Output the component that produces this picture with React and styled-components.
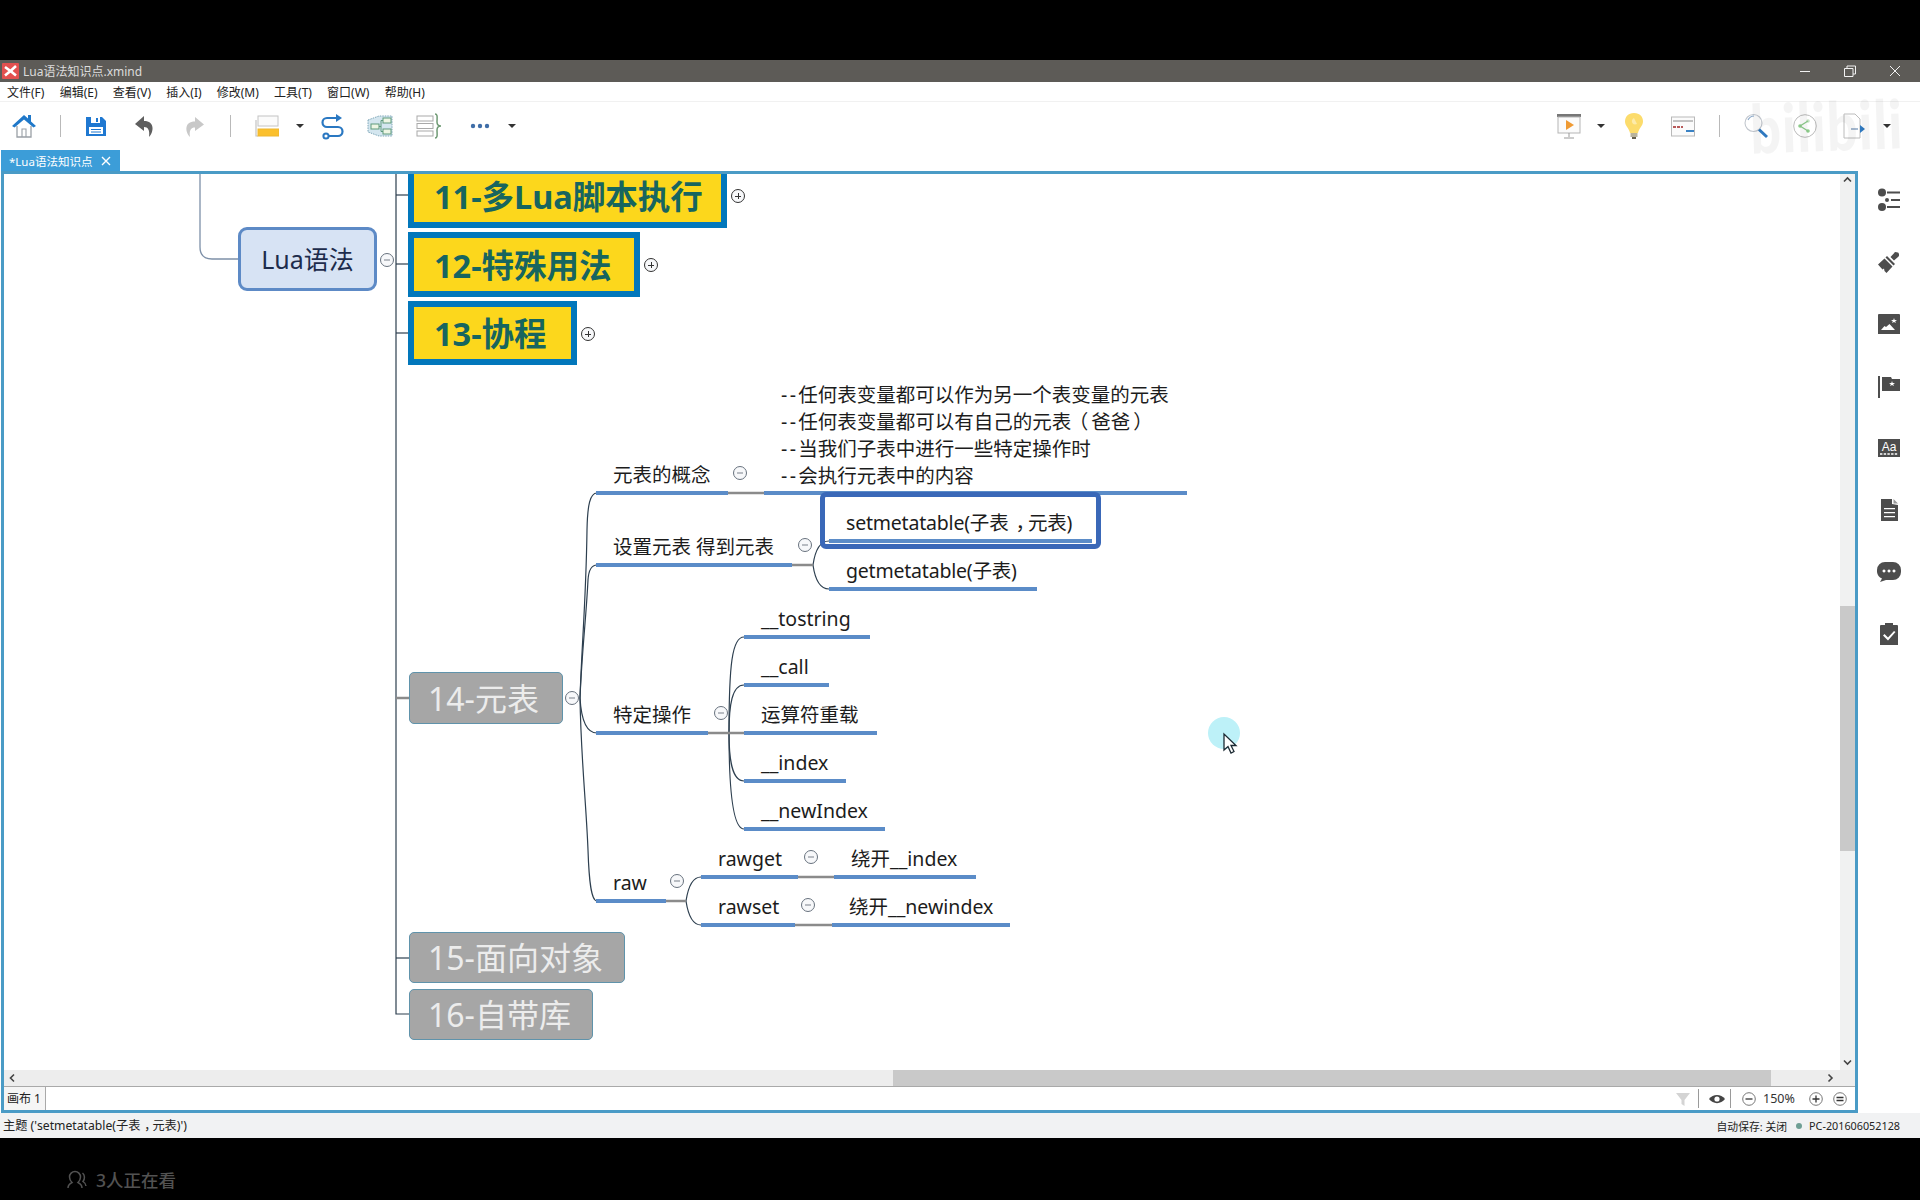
import styled, { createGlobalStyle } from 'styled-components';

const FONT = `"Noto Sans", "Noto Sans CJK SC", sans-serif`;

const GlobalStyle = createGlobalStyle`
    html, body {
        margin: 0;
        background: #000;
    }
    body {
        font-family: ${FONT};
    }
    * {
        box-sizing: border-box;
    }
`

const Page = styled.div`
    width: 1920px;
    height: 1200px;
    display: flex;
    flex-direction: column;
    overflow: hidden;
    background: #000;
`

const Letterbox = styled.div`
    height: ${props => props.$h}px;
    background: #000;
    flex-shrink: 0;
`

/* window chrome */

const TitleBar = styled.div`
    height: 22px;
    display: flex;
    align-items: center;
    padding-left: 2px;
    background: #5d5b57;
    color: #dcdcdc;
    font-size: 12px;
`

const TitleText = styled.span`
    margin-left: 4px;
`

const WindowButtons = styled.div`
    margin-left: auto;
    display: flex;
    align-items: center;
`

const WindowButton = styled.svg`
    width: 14px;
    height: 14px;
    margin-left: ${props => props.$ml}px;
    margin-right: ${props => props.$mr || 0}px;
    fill: none;
    stroke: #f2f2f2;
    stroke-width: 1;
`

const MenuBar = styled.div`
    height: 19px;
    display: flex;
    align-items: center;
    gap: 15.2px;
    padding-left: 7px;
    background: #fff;
    color: #222;
    font-size: 12px;
`

const Toolbar = styled.div`
    position: relative;
    height: 49px;
    display: flex;
    align-items: center;
    background: #fff;
    border-top: 1px solid #f1f1f1;
    padding-right: 29px;
`

const ToolIcon = styled.svg`
    width: ${props => props.$w}px;
    height: 28px;
    margin-left: ${props => props.$ml}px;
    flex-shrink: 0;
`

const ToolSep = styled.div`
    width: 1px;
    height: 22px;
    margin-left: ${props => props.$ml}px;
    background: #b9b9b9;
    flex-shrink: 0;
`

const Caret = styled.div`
    width: 0;
    height: 0;
    margin-left: ${props => props.$ml}px;
    border-left: 4px solid transparent;
    border-right: 4px solid transparent;
    border-top: 4px solid #333;
    flex-shrink: 0;
`

const Spring = styled.div`
    flex: 1;
`

const Watermark = styled.div`
    position: absolute;
    left: 1750px;
    top: -6px;
    font-family: "Lato", sans-serif;
    font-size: 54px;
    font-weight: 900;
    letter-spacing: 1px;
    line-height: 60px;
    color: rgba(0, 0, 0, 0.045);
    transform: rotate(-2deg) scaleY(1.25);
    pointer-events: none;
`

const TabRow = styled.div`
    height: 21px;
    padding-left: 1px;
    background: #fff;
    display: flex;
`

const Tab = styled.div`
    width: 119px;
    display: flex;
    align-items: center;
    justify-content: space-between;
    padding: 0 9px 0 8px;
    background: #3c9dd8;
    color: #fff;
    font-size: 11.5px;
`

/* editor */

const Main = styled.div`
    height: 942px;
    display: flex;
    padding-left: 1px;
    background: #fff;
`

const Frame = styled.div`
    width: 1857px;
    display: flex;
    flex-direction: column;
    border: 3px solid #4a9bc6;
`

const Work = styled.div`
    flex: 1;
    display: flex;
    min-height: 0;
`

const Canvas = styled.div`
    position: relative;
    flex: 1;
    overflow: hidden;
    background: #fff;
`

const Wires = styled.svg`
    position: absolute;
    left: 0;
    top: 0;
    width: 1836px;
    height: 896px;
    fill: none;
`

const VScroll = styled.div`
    width: 15px;
    display: flex;
    flex-direction: column;
    align-items: center;
    background: #f0f1f1;
    color: #444;
    padding: 0 0 2px;
`

const VThumb = styled.div`
    width: 100%;
    height: 245px;
    margin-top: 420px;
    margin-bottom: auto;
    background: #c9c9c9;
`

const HScroll = styled.div`
    height: 16px;
    display: flex;
    align-items: center;
    padding-right: 17px;
    background: #ededed;
    color: #444;
`

const HThumb = styled.div`
    width: 878px;
    height: 100%;
    margin-left: 873px;
    margin-right: auto;
    background: #c9c9c9;
`

const SheetBar = styled.div`
    height: 24px;
    display: flex;
    align-items: center;
    background: #fff;
    border-top: 1px solid #a9a9a9;
    color: #333;
    font-size: 12px;
`

const SheetTab = styled.div`
    width: 42px;
    height: 100%;
    padding: 0 0 2px 3px;
    display: flex;
    align-items: center;
    border-right: 1px solid #a9a9a9;
    background: #f5f5f5;
    color: #222;
`

const SheetIcon = styled.svg`
    width: ${props => props.$w}px;
    height: 18px;
    margin-left: ${props => props.$ml}px;
    margin-right: ${props => props.$mr || 0}px;
    flex-shrink: 0;
`

const SheetSep = styled.div`
    width: 1px;
    height: 19px;
    margin-left: ${props => props.$ml}px;
    background: #9a9a9a;
    flex-shrink: 0;
`

const ZoomValue = styled.span`
    width: 32px;
    margin-left: 7px;
    font-size: 12.5px;
    color: #333;
    white-space: nowrap;
`

const Sidebar = styled.div`
    flex: 1;
    display: flex;
    flex-direction: column;
    align-items: center;
    gap: 38px;
    padding-top: 17px;
    background: #fff;
`

const SideIcon = styled.svg`
    width: 24px;
    height: 24px;
    fill: #4d4d4d;
    flex-shrink: 0;
`

const StatusBar = styled.div`
    height: 25px;
    display: flex;
    align-items: center;
    padding: 0 20px 0 3px;
    background: #f1f2f3;
    color: #222;
    font-size: 12.2px;
`

const StatusText = styled.span`
    padding-bottom: 2px;
`

const StatusRight = styled.div`
    margin-left: auto;
    display: flex;
    align-items: center;
    font-size: 10.8px;
`

const StatusDot = styled.span`
    width: 6px;
    height: 6px;
    margin: 0 7px 0 9px;
    border-radius: 50%;
    background: #6f9f94;
`

const Footer = styled.div`
    flex: 1;
    display: flex;
    align-items: center;
    padding: 21px 0 0 66px;
    background: #000;
    color: #525252;
    font-size: 17.5px;
    font-weight: 500;
`

const FooterIcon = styled.svg`
    width: 21px;
    height: 20px;
    margin-right: 9px;
    fill: none;
    stroke: #525252;
    stroke-width: 1.5;
`

/* mind map: nodes sit on a free canvas, x/y are taken from screen pixels, canvas starts at 4,174 */

const OX = 4;
const OY = 174;

const MapBox = styled.div`
    position: absolute;
    left: ${props => props.$x - OX}px;
    top: ${props => props.$y - OY}px;
    width: ${props => props.$w}px;
    height: ${props => props.$h}px;
    display: flex;
    align-items: center;
    white-space: nowrap;
`

const YellowTopic = styled(MapBox)`
    padding: 0 0 2px 20px;
    background: #fcd71c;
    border: 6px solid #0277bb;
    color: #17655f;
    font-size: 32.5px;
    font-weight: 700;
`

const GreyTopic = styled(MapBox)`
    padding: 0 0 3px 18px;
    background: #a6a6a6;
    border: 1.5px solid #5f93ab;
    border-radius: 5px;
    color: #ececec;
    font-size: 32px;
`

const LuaTopic = styled(MapBox)`
    justify-content: center;
    padding-bottom: 2px;
    background: #d7e3f4;
    border: 3px solid #5d8ac6;
    border-radius: 9px;
    color: #1d2c4c;
    font-size: 25px;
`

const Selection = styled(MapBox)`
    border: 5px solid #3a68b8;
    border-radius: 6px;
`

const Topic = styled.div`
    position: absolute;
    left: ${props => props.$x - OX}px;
    top: ${props => props.$y - OY + 2}px;
    width: ${props => props.$w}px;
    transform: translateY(-100%);
    padding: 0 0 2px 17px;
    border-bottom: 4px solid #5b8cc8;
    color: #1c1c1c;
    font-size: 19.5px;
    line-height: ${props => props.$lh || 28}px;
    letter-spacing: ${props => props.$ls || 0}px;
    white-space: pre;
`

const Dash = styled.span`
    letter-spacing: 2.4px;
`

/* full width punctuation sits centred in the screenshot's font: half width glyph with padding round it */
const Punct = styled.span`
    display: inline-block;
    font-feature-settings: "halt";
    padding-left: ${props => props.$pl}px;
    padding-right: ${props => props.$pr}px;
`

const Toggle = styled.div`
    position: absolute;
    left: ${props => props.$x - OX - 7}px;
    top: ${props => props.$y - OY - 7}px;
    width: 14px;
    height: 14px;
    border-radius: 50%;
    background: #f7f8fa;
    border: 1px solid ${props => props.$plus ? '#333' : '#68727e'};

    &::before {
        content: "";
        position: absolute;
        left: 3px;
        right: 3px;
        top: ${props => props.$plus ? 5.5 : 5}px;
        height: ${props => props.$plus ? 1 : 2}px;
        background: ${props => props.$plus ? '#333' : '#b8bcc2'};
    }

    ${props => props.$plus && `
        &::after {
            content: "";
            position: absolute;
            top: 3px;
            bottom: 3px;
            left: 5.5px;
            width: 1px;
            background: #333;
        }
    `}
`

const Pointer = styled.svg`
    position: absolute;
    left: ${1208 - OX}px;
    top: ${717 - OY}px;
    width: 34px;
    height: 38px;
`

const yellowTopics = [
    { x: 408, y: 163, w: 319, h: 65, text: '11-多Lua脚本执行' },
    { x: 408, y: 232, w: 232, h: 65, text: '12-特殊用法' },
    { x: 408, y: 301, w: 169, h: 64, text: '13-协程' },
];

const greyTopics = [
    { x: 409, y: 672, w: 154, h: 52, text: '14-元表' },
    { x: 409, y: 932, w: 216, h: 51, text: '15-面向对象' },
    { x: 409, y: 989, w: 184, h: 51, text: '16-自带库' },
];

const note = (
    <>
        <Dash>--</Dash>任何表变量都可以作为另一个表变量的元表{'\n'}
        <Dash>--</Dash>任何表变量都可以有自己的元表<Punct $pl={7} $pr={3}>（</Punct>爸爸<Punct $pl={3} $pr={0}>）</Punct>{'\n'}
        <Dash>--</Dash>当我们子表中进行一些特定操作时{'\n'}
        <Dash>--</Dash>会执行元表中的内容
    </>
);

const topics = [
    { x: 596, y: 493, w: 132, text: '元表的概念' },
    { x: 764, y: 493, w: 423, lh: 27, text: note },
    { x: 596, y: 565, w: 196, text: '设置元表 得到元表' },
    { x: 829, y: 541, w: 263, ls: -0.2, text: <>setmetatable(子表<Punct $pl={7} $pr={3}>，</Punct>元表)</> },
    { x: 829, y: 589, w: 208, ls: -0.2, text: 'getmetatable(子表)' },
    { x: 596, y: 733, w: 112, text: '特定操作' },
    { x: 744, y: 637, w: 126, text: '__tostring' },
    { x: 744, y: 685, w: 85, text: '__call' },
    { x: 744, y: 733, w: 133, text: '运算符重载' },
    { x: 744, y: 781, w: 102, text: '__index' },
    { x: 744, y: 829, w: 141, text: '__newIndex' },
    { x: 596, y: 901, w: 70, text: 'raw' },
    { x: 701, y: 877, w: 97, text: 'rawget' },
    { x: 834, y: 877, w: 142, text: '绕开__index' },
    { x: 701, y: 925, w: 94, text: 'rawset' },
    { x: 832, y: 925, w: 178, text: '绕开__newindex' },
];

const toggles = [
    { x: 387, y: 260 },
    { x: 738, y: 196, plus: true },
    { x: 651, y: 265, plus: true },
    { x: 588, y: 334, plus: true },
    { x: 740, y: 473 },
    { x: 805, y: 545 },
    { x: 572, y: 698 },
    { x: 721, y: 713 },
    { x: 677, y: 881 },
    { x: 811, y: 857 },
    { x: 808, y: 905 },
];

const darkWires = [
    'M396 174 V1014 H409',
    'M396 195 H408',
    'M396 264 H408',
    'M396 333 H408',
    'M396 958 H409',
    'M580 698 C582 640 586 600 587 530 C587.5 505 590 493 597 493',
    'M580 698 C582 650 586 620 588 580 C588.5 572 591 565 597 565',
    'M580 698 C581 715 585 733 597 733',
    'M580 698 C581 760 586 800 588 850 C589 880 591 901 597 901',
    'M813 565 C815 551 820 541 829 541',
    'M813 565 C815 579 820 589 829 589',
    'M729 733 C729 665 732 637 744 637',
    'M729 733 C729 705 732 685 744 685',
    'M729 733 C729 760 732 781 744 781',
    'M729 733 C729 785 732 829 744 829',
    'M686 901 C688 888 692 877 701 877',
    'M686 901 C688 914 692 925 701 925',
];

const greyWires = [
    'M728 493 H764',
    'M792 565 H813',
    'M708 733 H744',
    'M665 901 H686',
    'M798 877 H834',
    'M795 925 H832',
    'M396 698 H409',
];

function MindMap() {
    return (
        <Canvas>
            <Wires viewBox={`${OX} ${OY} 1836 896`}>
                <path d="M200 174 V247 Q200 259 212 259 H239" stroke="#7d90a8" strokeWidth="1.3" />
                {darkWires.map((d) => <path key={d} d={d} stroke="#2d3f4f" strokeWidth="1.2" />)}
                {greyWires.map((d) => <path key={d} d={d} stroke="#8b8b8b" strokeWidth="2.5" />)}
            </Wires>

            <LuaTopic $x={238} $y={227} $w={139} $h={64}>Lua语法</LuaTopic>
            {yellowTopics.map((t) => <YellowTopic key={t.text} $x={t.x} $y={t.y} $w={t.w} $h={t.h}>{t.text}</YellowTopic>)}
            {greyTopics.map((t) => <GreyTopic key={t.text} $x={t.x} $y={t.y} $w={t.w} $h={t.h}>{t.text}</GreyTopic>)}
            {topics.map((t) => <Topic key={`${t.x}-${t.y}`} $x={t.x} $y={t.y} $w={t.w} $lh={t.lh} $ls={t.ls}>{t.text}</Topic>)}
            <Selection $x={820} $y={492} $w={281} $h={57} />
            {toggles.map((t) => <Toggle key={`${t.x}-${t.y}`} $x={t.x} $y={t.y} $plus={t.plus} />)}

            <Pointer viewBox="0 0 34 38">
                <circle cx="16" cy="16" r="16" fill="#bdf1f8" />
                <path d="M16 17 V33 L20 29.5 L23 36 L26 34.5 L23 28.5 H28 Z" fill="#fff" stroke="#1c2a33" strokeWidth="1.3" />
            </Pointer>
        </Canvas>
    );
}

function LeftTools() {
    return (
        <>
            <ToolIcon $w={26} $ml={11} viewBox="0 0 26 28">
                <path d="M6 14 V25 H20 V14" fill="#fff" stroke="#9aa0a6" strokeWidth="1.3" />
                <path d="M11 25 V17 H15 V25" fill="none" stroke="#9aa0a6" strokeWidth="1.1" />
                <path d="M1 14 L13 3 L17 6.5 V3 H20 V9.5 L25 14 L22.5 15.5 L13 7.5 L3.5 15.5 Z" fill="#1f78c9" />
            </ToolIcon>
            <ToolSep $ml={23} />
            <ToolIcon $w={20} $ml={25} viewBox="0 0 20 28">
                <path d="M0 5 H16 L20 9 V24 H0 Z" fill="#1f78d1" />
                <rect x="5" y="5" width="9" height="6" fill="#fff" />
                <rect x="10" y="6" width="2" height="4" fill="#1f78d1" />
                <rect x="3" y="15" width="14" height="7" fill="#fff" />
                <path d="M5 17.5 H15 M5 20 H15" stroke="#1f78d1" strokeWidth="1" />
            </ToolIcon>
            <ToolIcon $w={20} $ml={29} viewBox="0 0 20 28">
                <path d="M9 4 L0 12 L9 19 V15 C13 15 15 18 14 25 C19 20 20 9 9 9 Z" fill="#5f5f5f" />
            </ToolIcon>
            <ToolIcon $w={20} $ml={29} viewBox="0 0 20 28">
                <path d="M11 5 L20 12.5 L11 19 V15.5 C7 15.5 5 18 6 25 C1 20 0 9.5 11 9.5 Z" fill="#c8c8c8" />
            </ToolIcon>
            <ToolSep $ml={26} />
            <ToolIcon $w={24} $ml={24} viewBox="0 0 24 28">
                <path d="M1 8 V24 H3" fill="none" stroke="#c4c4c4" strokeWidth="1.2" />
                <rect x="3" y="4" width="20" height="10" fill="#fbfbfb" stroke="#c4c4c4" />
                <rect x="3" y="17" width="21" height="7" fill="#fbc02d" stroke="#eeb730" />
            </ToolIcon>
            <Caret $ml={17} />
            <ToolIcon $w={24} $ml={16} viewBox="0 0 24 28">
                <path d="M17 6 H7 A4.5 4.5 0 0 0 7 15 H18 A4.5 4.5 0 0 1 18 24 H8" fill="none" stroke="#2a78c2" strokeWidth="2.2" />
                <path d="M16 2 L22 6 L16 10 Z" fill="#2a78c2" />
                <circle cx="6" cy="24" r="2.6" fill="#fff" stroke="#2a78c2" strokeWidth="2" />
            </ToolIcon>
            <ToolIcon $w={26} $ml={23} viewBox="0 0 26 28">
                <path d="M1 8 L12 4 H25 V24 H12 L1 20 Z" fill="#d4e6ef" stroke="#7ea6b8" strokeWidth="1" strokeDasharray="1.5 1" />
                <rect x="4" y="12" width="8" height="5" fill="#eef6e4" stroke="#5f9a7c" />
                <rect x="16" y="6" width="8" height="5" fill="#eef6e4" stroke="#5f9a7c" />
                <rect x="16" y="17" width="8" height="5" fill="#eef6e4" stroke="#5f9a7c" />
                <path d="M12 14.5 H14 M14 8.5 V19.5 M14 8.5 H16 M14 19.5 H16" stroke="#5f9a7c" fill="none" />
            </ToolIcon>
            <ToolIcon $w={26} $ml={23} viewBox="0 0 26 28">
                <rect x="1" y="4" width="16" height="5" fill="#fff" stroke="#a9a9a9" />
                <rect x="1" y="11.5" width="16" height="5" fill="#fff" stroke="#a9a9a9" />
                <rect x="1" y="19" width="16" height="5" fill="#fff" stroke="#a9a9a9" />
                <path d="M19 2 C22 2 21 6 21 10 C21 12 22 14 25 14 C22 14 21 16 21 18 C21 22 22 26 19 26" fill="none" stroke="#6f9a74" strokeWidth="1.5" />
            </ToolIcon>
            <ToolIcon $w={20} $ml={28} viewBox="0 0 20 28">
                <circle cx="3" cy="14" r="2.2" fill="#3f6ea8" />
                <circle cx="10" cy="14" r="2.2" fill="#3f6ea8" />
                <circle cx="17" cy="14" r="2.2" fill="#3f6ea8" />
            </ToolIcon>
            <Caret $ml={18} />
        </>
    );
}

function RightTools() {
    return (
        <>
            <ToolIcon $w={24} viewBox="0 0 24 28">
                <rect x="0" y="2" width="24" height="3" fill="#777" />
                <rect x="1" y="5" width="22" height="16" fill="#fbfbfb" stroke="#b5b5b5" />
                <path d="M9 8 L17 13 L9 18 Z" fill="#ef9a33" />
                <path d="M12 21 V25 M7 26 H17" stroke="#999" />
            </ToolIcon>
            <Caret $ml={16} />
            <ToolIcon $w={20} $ml={19} viewBox="0 0 20 28">
                <path d="M10 1 C4 1 1 5 1 9.5 C1 14 5 16 6 21 H14 C15 16 19 14 19 9.5 C19 5 16 1 10 1 Z" fill="#fcdc6c" />
                <path d="M10 6 C6 8 8 14 13 12" fill="#fdebaa" />
                <rect x="6.5" y="21" width="7" height="4" fill="#b9b39c" />
                <rect x="8" y="25" width="4" height="2" fill="#66604f" />
            </ToolIcon>
            <ToolIcon $w={24} $ml={27} viewBox="0 0 24 28">
                <rect x="0.5" y="5" width="23" height="19" fill="#fbfbfb" stroke="#b9b9b9" />
                <path d="M2 9 H22" stroke="#8a8a8a" />
                <path d="M2 15 H12" stroke="#b85a5a" strokeWidth="2" strokeDasharray="3 1" />
                <path d="M15 19 H23" stroke="#3b82c4" strokeWidth="2" />
            </ToolIcon>
            <ToolSep $ml={24} />
            <ToolIcon $w={24} $ml={24} viewBox="0 0 24 28">
                <circle cx="9.5" cy="11" r="8.5" fill="none" stroke="#c2c7ce" strokeWidth="1.1" />
                <path d="M4 8 A7 7 0 0 1 10 4" fill="none" stroke="#8aa8c9" strokeWidth="1.1" />
                <path d="M15 17.5 L23 25" stroke="#2f79c0" strokeWidth="3" />
            </ToolIcon>
            <ToolIcon $w={24} $ml={25} viewBox="0 0 24 28">
                <circle cx="12" cy="14" r="11.3" fill="none" stroke="#bcbcbc" />
                <circle cx="7" cy="14" r="1.8" fill="#8ccb8a" />
                <circle cx="15" cy="9" r="1.8" fill="#c6e2c4" />
                <circle cx="15" cy="19" r="1.8" fill="#8ccb8a" />
                <path d="M7 14 L15 9 M7 14 L15 19" stroke="#8ccb8a" strokeWidth="1.3" />
            </ToolIcon>
            <ToolIcon $w={23} $ml={26} viewBox="0 0 23 28">
                <path d="M1 2 H12 L17 7 V26 H1 Z" fill="#fff" stroke="#bcbcbc" />
                <path d="M8 17 H15" stroke="#a8bcd3" strokeWidth="2" />
                <path d="M17 13 L22 17 L17 21 Z" fill="#2f79c0" />
            </ToolIcon>
            <Caret $ml={17} />
        </>
    );
}

function SideIcons() {
    return (
        <>
            <SideIcon viewBox="0 0 24 24">
                <circle cx="5" cy="4.5" r="4" />
                <circle cx="5" cy="19" r="4" />
                <circle cx="10" cy="12" r="2" />
                <path d="M10 3.5 H23 V5.5 H10 Z M14 11 H23 V13 H14 Z M10 18 H23 V20 H10 Z" />
            </SideIcon>
            <SideIcon viewBox="0 0 24 24">
                <path d="M13.5 7 L17 3.2 A2 2 0 0 1 19.4 2.2 A2.4 2.4 0 0 1 22 4.8 A2 2 0 0 1 21 7 L17 10.5 Z" />
                <path d="M10 6 L18 14 L16.5 15.5 L8.5 7.5 Z" />
                <path d="M7.5 8.5 L15.5 16.5 L9.5 23 L7.5 21 L7 18.5 L5.5 19.5 L1 14.5 Z" />
            </SideIcon>
            <SideIcon viewBox="0 0 24 24">
                <path fillRule="evenodd" d="M2 2 H22 A1 1 0 0 1 23 3 V22 H1 V3 A1 1 0 0 1 2 2 Z M4 18 H18 L12.5 12 L9 15 L7.5 14 Z M17 6 L17.7 8 L20 8 L18.2 9.2 L18.9 11 L17 10 L15.1 11 L15.8 9.2 L14 8 L16.3 8 Z" />
            </SideIcon>
            <SideIcon viewBox="0 0 24 24">
                <path d="M1 2 H3 V24 H1 Z" />
                <path fillRule="evenodd" d="M5 3 H14 L15 5 H23 V17 H5 Z M15 7 L15.7 9 L18 9 L16.2 10.2 L16.9 12 L15 11 L13.1 12 L13.8 10.2 L12 9 L14.3 9 Z" />
            </SideIcon>
            <SideIcon viewBox="0 0 24 24">
                <path d="M1 3 H23 V21 H1 Z" />
                <text x="12" y="14.5" textAnchor="middle" fontSize="12" fontFamily="Liberation Sans" fill="#fff">Aa</text>
                <path d="M3 18 H21" stroke="#fff" strokeWidth="1.3" strokeDasharray="2.4 1.3" />
            </SideIcon>
            <SideIcon viewBox="0 0 24 24">
                <path fillRule="evenodd" d="M4 1 H15 L15 6 L21 7 V23 H4 Z M7 10 H18 V11.2 H7 Z M7 14 H18 V15.2 H7 Z M7 18 H18 V19.2 H7 Z" />
                <path d="M16.5 1 L21 5.5 H16.5 Z" fill="#999" />
            </SideIcon>
            <SideIcon viewBox="0 0 24 24">
                <path fillRule="evenodd" d="M8 2 H16 A8 8 0 0 1 24 10 V12 A8 8 0 0 1 16 20 H9 L3 22 L5 18.5 A8 8 0 0 1 0 12 V10 A8 8 0 0 1 8 2 Z M7 9.5 a1.5 1.5 0 1 0 0.01 0 Z M12 9.5 a1.5 1.5 0 1 0 0.01 0 Z M17 9.5 a1.5 1.5 0 1 0 0.01 0 Z" />
            </SideIcon>
            <SideIcon viewBox="0 0 24 24">
                <path fillRule="evenodd" d="M4 3 H8 V1 H16 V3 H20 A1 1 0 0 1 21 4 V23 H3 V4 A1 1 0 0 1 4 3 Z M6 13.5 L11 18.5 L18.5 10 L17 9 L11 15.5 L7.5 12 Z" />
            </SideIcon>
        </>
    );
}

function App() {
    return (
        <>
            <GlobalStyle />
            <Page>
                <Letterbox $h={60} />
                <TitleBar>
                    <svg width="17" height="16" viewBox="0 0 17 16">
                        <rect width="17" height="16" rx="1" fill="#e2504f" />
                        <path d="M3 4 L8.5 8 L14 3 M3 12.5 L8.5 8 L14 12.5" stroke="#fff" strokeWidth="2.6" fill="none" />
                    </svg>
                    <TitleText>Lua语法知识点.xmind</TitleText>
                    <WindowButtons>
                        <WindowButton viewBox="0 0 14 14" $ml={0}><path d="M2 7.5 H12" /></WindowButton>
                        <WindowButton viewBox="0 0 14 14" $ml={31}><path d="M1.5 4.5 H10 V12.5 H1.5 Z M4 4.5 V2 H12.5 V10 H10" /></WindowButton>
                        <WindowButton viewBox="0 0 14 14" $ml={31} $mr={18}><path d="M2 2 L12 12 M12 2 L2 12" /></WindowButton>
                    </WindowButtons>
                </TitleBar>
                <MenuBar>
                    <span>文件(F)</span>
                    <span>编辑(E)</span>
                    <span>查看(V)</span>
                    <span>插入(I)</span>
                    <span>修改(M)</span>
                    <span>工具(T)</span>
                    <span>窗口(W)</span>
                    <span>帮助(H)</span>
                </MenuBar>
                <Toolbar>
                    <LeftTools />
                    <Spring />
                    <RightTools />
                    <Watermark>bilibili</Watermark>
                </Toolbar>
                <TabRow>
                    <Tab>
                        <span>*Lua语法知识点</span>
                        <svg width="10" height="10" viewBox="0 0 10 10">
                            <path d="M1 1 L9 9 M9 1 L1 9" stroke="#fff" strokeWidth="1.4" />
                        </svg>
                    </Tab>
                </TabRow>
                <Main>
                    <Frame>
                        <Work>
                            <MindMap />
                            <VScroll>
                                <svg width="11" height="12" viewBox="0 0 11 12"><path d="M2 7.5 L5.5 4 L9 7.5" fill="none" stroke="#444" strokeWidth="1.6" /></svg>
                                <VThumb />
                                <svg width="11" height="12" viewBox="0 0 11 12"><path d="M2 4.5 L5.5 8 L9 4.5" fill="none" stroke="#444" strokeWidth="1.6" /></svg>
                            </VScroll>
                        </Work>
                        <HScroll>
                            <svg width="16" height="12" viewBox="0 0 16 12"><path d="M10 2.5 L6.5 6 L10 9.5" fill="none" stroke="#444" strokeWidth="1.6" /></svg>
                            <HThumb />
                            <svg width="16" height="12" viewBox="0 0 16 12"><path d="M6.5 2.5 L10 6 L6.5 9.5" fill="none" stroke="#444" strokeWidth="1.6" /></svg>
                        </HScroll>
                        <SheetBar>
                            <SheetTab>画布 1</SheetTab>
                            <Spring />
                            <SheetIcon $w={14} viewBox="0 0 14 18">
                                <path d="M0 3 H14 L8.5 10 V16 L5.5 14 V10 Z" fill="#d4d4d4" />
                            </SheetIcon>
                            <SheetSep $ml={8} />
                            <SheetIcon $w={18} $ml={9} viewBox="0 0 18 18">
                                <path d="M1 9 C5 3.5 13 3.5 17 9 C13 14.5 5 14.5 1 9 Z" fill="#444" />
                                <circle cx="9" cy="9" r="2.6" fill="#fff" />
                            </SheetIcon>
                            <SheetSep $ml={4} />
                            <SheetIcon $w={14} $ml={11} viewBox="0 0 14 18">
                                <circle cx="7" cy="9" r="6.3" fill="#fff" stroke="#777" />
                                <path d="M3.5 9 H10.5" stroke="#333" strokeWidth="1.3" />
                            </SheetIcon>
                            <ZoomValue>150%</ZoomValue>
                            <SheetIcon $w={14} $ml={14} viewBox="0 0 14 18">
                                <circle cx="7" cy="9" r="6.3" fill="#fff" stroke="#777" />
                                <path d="M3.5 9 H10.5 M7 5.5 V12.5" stroke="#333" strokeWidth="1.3" />
                            </SheetIcon>
                            <SheetIcon $w={14} $ml={10} $mr={8} viewBox="0 0 14 18">
                                <circle cx="7" cy="9" r="6.3" fill="#fff" stroke="#777" />
                                <path d="M3.5 7.5 H10.5 M3.5 10.5 H10.5" stroke="#333" strokeWidth="1.3" />
                            </SheetIcon>
                        </SheetBar>
                    </Frame>
                    <Sidebar>
                        <SideIcons />
                    </Sidebar>
                </Main>
                <StatusBar>
                    <StatusText>主题 ('setmetatable(子表<Punct $pl={4} $pr={2}>，</Punct>元表)')</StatusText>
                    <StatusRight>
                        <span>自动保存: 关闭</span>
                        <StatusDot />
                        <span>PC-201606052128</span>
                    </StatusRight>
                </StatusBar>
                <Footer>
                    <FooterIcon viewBox="0 0 21 20">
                        <path d="M2 18 C2 14.5 4 13.5 6 12.5 C4.5 11 3.5 9 3.5 7 A5.5 5.5 0 0 1 14.5 7 C14.5 9 13.5 11 12 12.5 C14 13.5 16 14.5 16 18" />
                        <path d="M16.5 3 C19 5 19 9 17 11.5 C18.5 12.5 20 14 20 16" />
                    </FooterIcon>
                    <span>3人正在看</span>
                </Footer>
            </Page>
        </>
    );
}

export default App;
